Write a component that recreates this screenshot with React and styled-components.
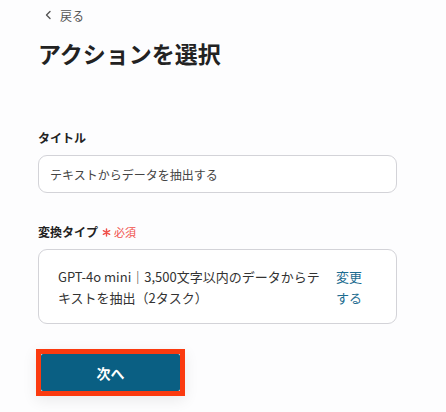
import React from "react";
import styled, { createGlobalStyle } from "styled-components";

const GlobalStyle = createGlobalStyle`
  body {
    margin: 0;
    background: #fdfdfe;
    font-family: "Noto Sans CJK JP", "Noto Sans", sans-serif;
    color: #2b2b2b;
  }
`;

const Page = styled.div`
  width: 446px;
  height: 412px;
  box-sizing: border-box;
  padding: 4px 49px 0 38px;
  overflow: hidden;
`;

const BackLink = styled.a`
  display: flex;
  align-items: center;
  gap: 7px;
  margin-left: 6px;
  height: 22px;
  font-size: 12px;
  color: #555;
  text-decoration: none;
`;

const Title = styled.h1`
  margin: 10px 0 0;
  font-size: 23px;
  line-height: 34px;
  font-weight: 700;
  color: #222;
`;

const Field = styled.div`
  display: flex;
  flex-direction: column;
  margin-top: ${(p) => p.$top}px;
`;

const Label = styled.div`
  display: flex;
  align-items: center;
  gap: 4px;
  font-size: 12px;
  font-weight: 700;
  line-height: 20px;
  color: #222;
  margin-bottom: 7px;
`;

const Required = styled.span`
  display: flex;
  align-items: center;
  gap: 3px;
  font-size: 11px;
  font-weight: 400;
  color: #f0504a;
`;

const Input = styled.div`
  height: 38px;
  box-sizing: border-box;
  border: 1px solid #d3d3d8;
  border-radius: 9px;
  background: #fff;
  padding: 0 11px;
  display: flex;
  align-items: center;
  font-size: 12px;
  color: #444;
`;

const SelectBox = styled.div`
  height: 75px;
  box-sizing: border-box;
  border: 1px solid #d3d3d8;
  border-radius: 9px;
  background: #fff;
  padding: 0 33px 0 19px;
  display: flex;
  align-items: center;
  gap: 12px;
`;

const SelectText = styled.div`
  flex: 1;
  font-size: 13px;
  line-height: 21px;
  color: #333;
`;

const ChangeLink = styled.a`
  width: 27px;
  font-size: 13px;
  line-height: 21px;
  color: #1d6c90;
  text-decoration: none;
`;

const Highlight = styled.div`
  margin-top: 25px;
  margin-left: -2px;
  width: 149px;
  height: 47px;
  box-sizing: border-box;
  border: 5px solid #fb3a0f;
  box-shadow: 0 4px 14px rgba(0, 0, 0, 0.08);
`;

const NextButton = styled.button`
  display: block;
  width: 100%;
  height: 100%;
  border: none;
  border-radius: 2px;
  background: #0a5f83;
  color: #fff;
  font-family: inherit;
  font-size: 14px;
  font-weight: 700;
  cursor: pointer;
`;

const Chevron = () => (
  <svg width="9" height="10" viewBox="0 0 9 10">
    <path d="M6 1.5 2.5 5 6 8.5" fill="none" stroke="#555" strokeWidth="1.4" strokeLinecap="round" strokeLinejoin="round" />
  </svg>
);

const Asterisk = () => (
  <svg width="9" height="9" viewBox="0 0 10 10">
    <path d="M5 1v8M1.5 3l7 4M8.5 3l-7 4" stroke="#f0504a" strokeWidth="1.6" strokeLinecap="round" />
  </svg>
);

export default function App() {
  return (
    <>
      <GlobalStyle />
      <Page>
        <BackLink href="#">
          <Chevron />
          戻る
        </BackLink>
        <Title>アクションを選択</Title>
        <Field $top={58}>
          <Label>タイトル</Label>
          <Input>テキストからデータを抽出する</Input>
        </Field>
        <Field $top={29}>
          <Label>
            変換タイプ
            <Required>
              <Asterisk />
              必須
            </Required>
          </Label>
          <SelectBox>
            <SelectText>GPT-4o mini｜3,500文字以内のデータからテキストを抽出（2タスク）</SelectText>
            <ChangeLink href="#">変更する</ChangeLink>
          </SelectBox>
        </Field>
        <Highlight>
          <NextButton>次へ</NextButton>
        </Highlight>
      </Page>
    </>
  );
}
